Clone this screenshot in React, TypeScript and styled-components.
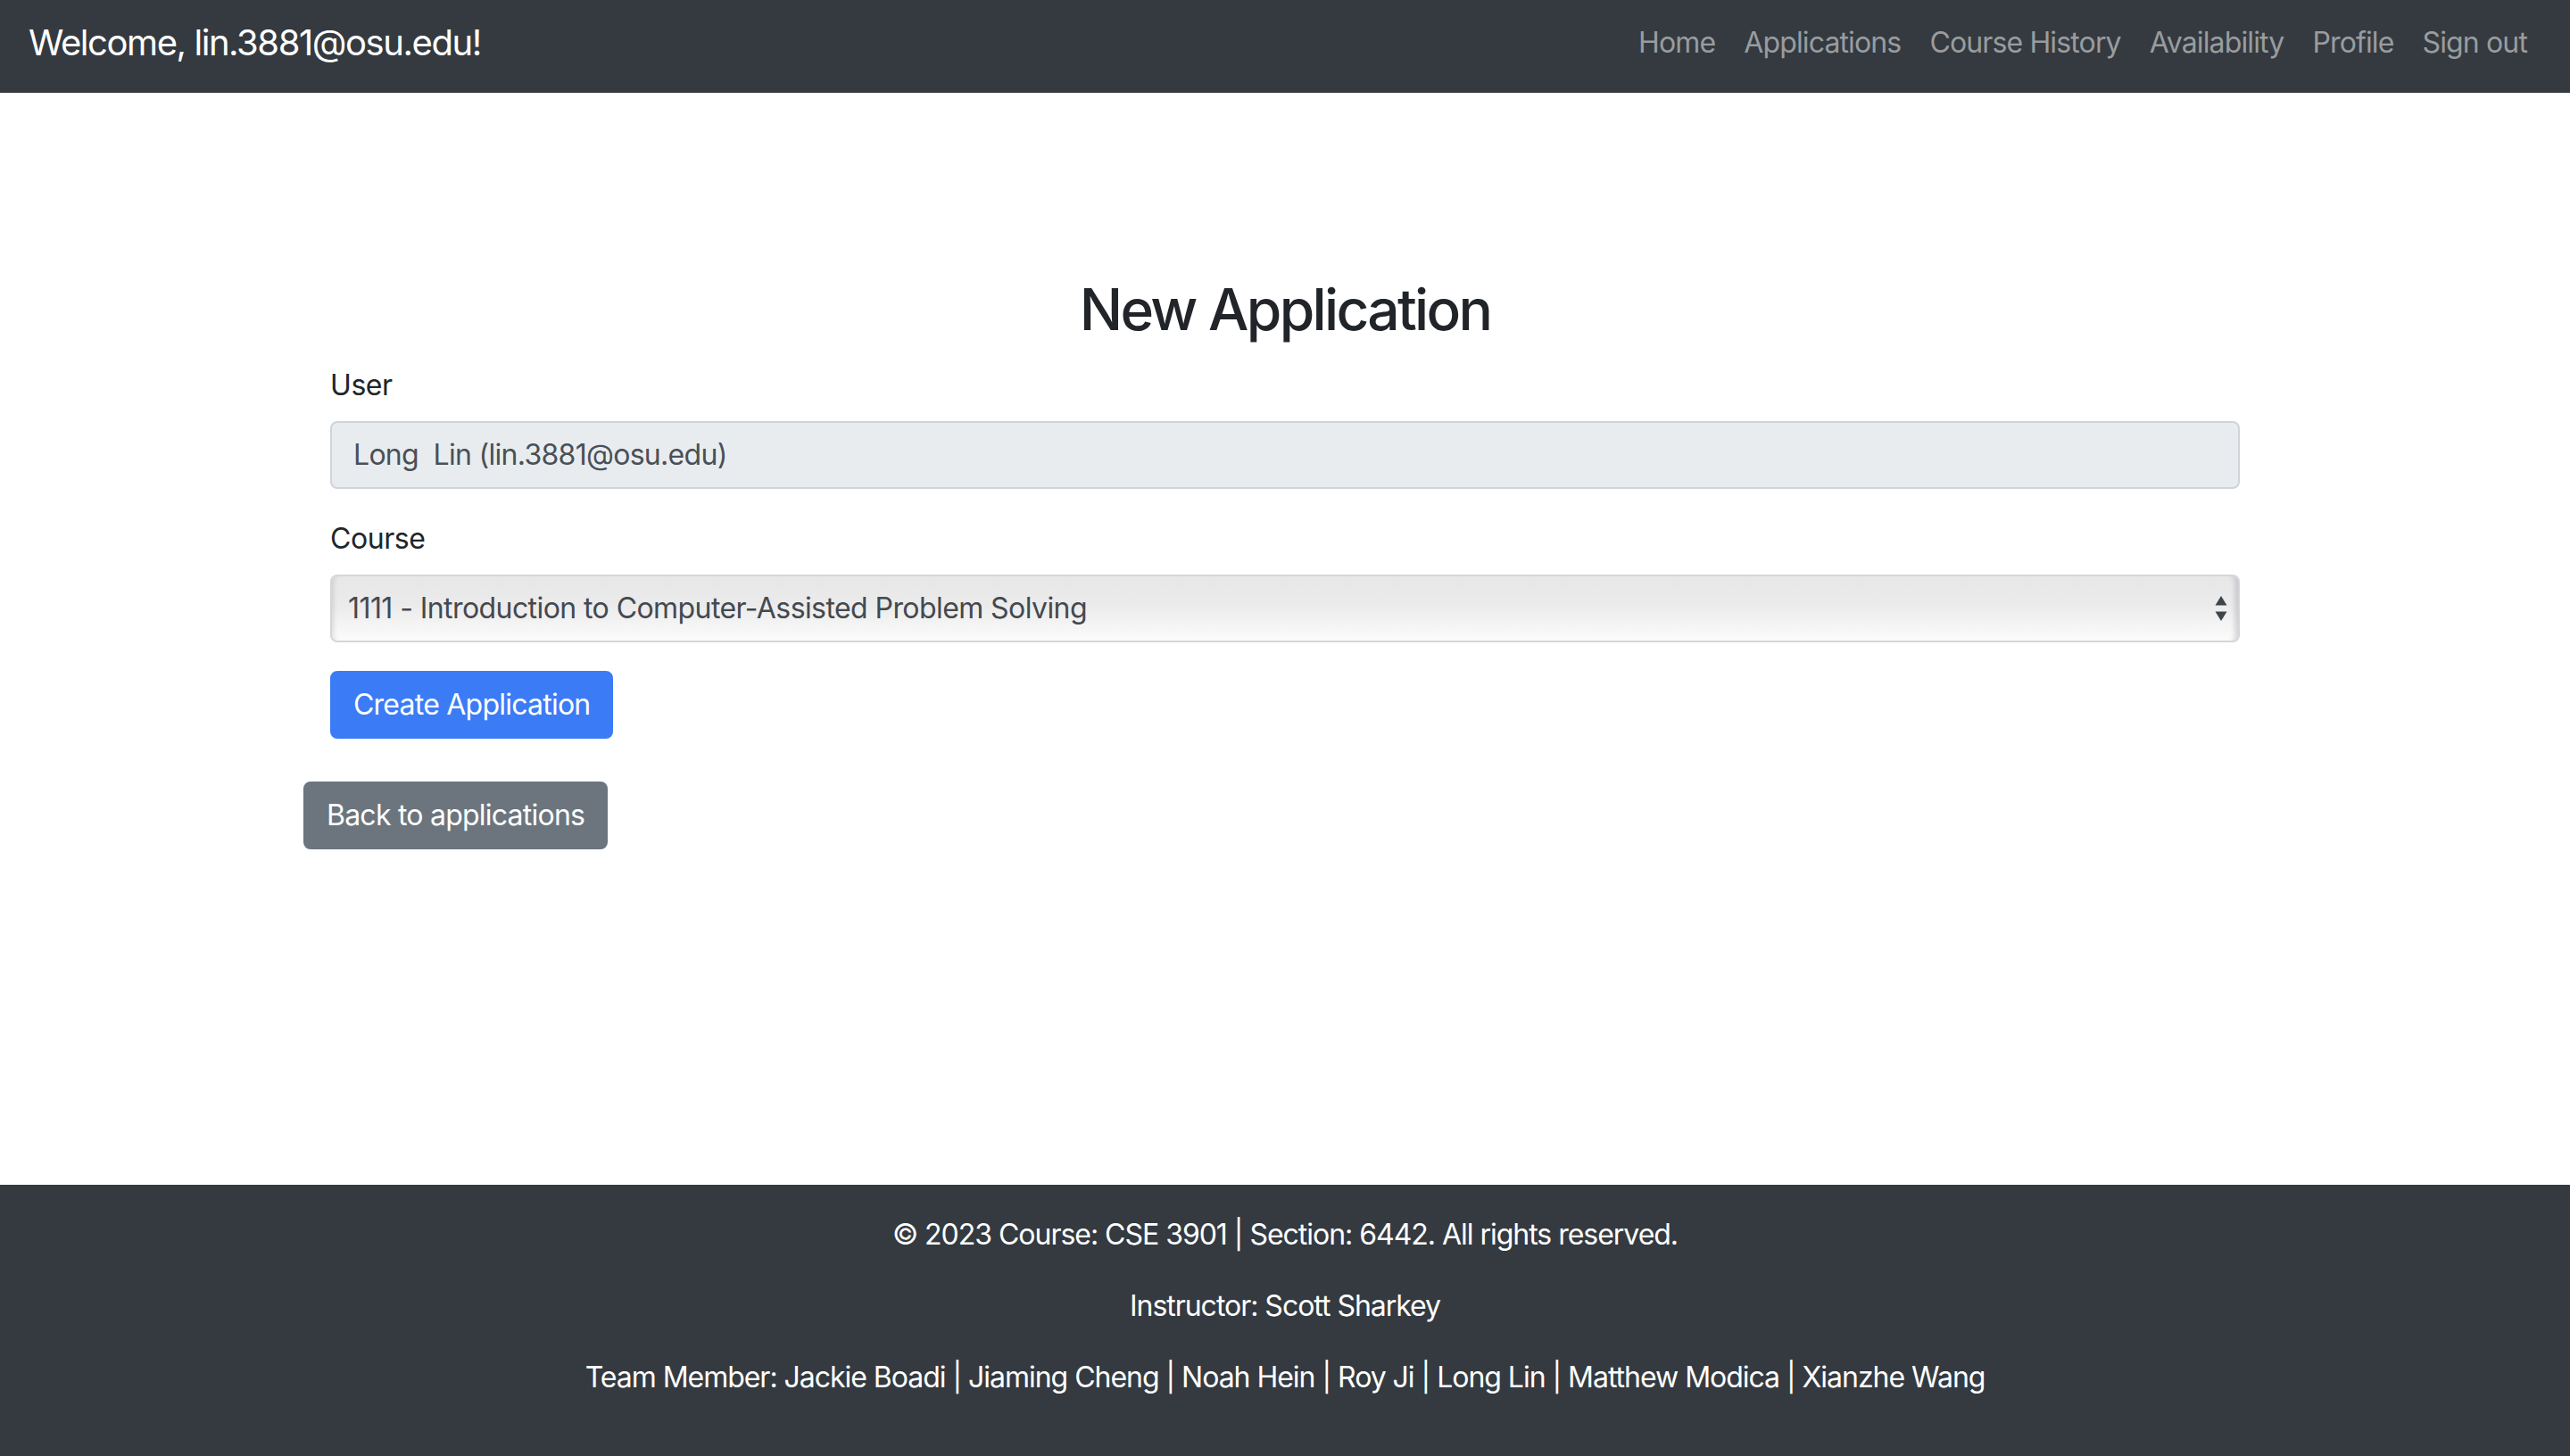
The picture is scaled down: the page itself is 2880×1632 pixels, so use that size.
import React from "react";
import styled, { createGlobalStyle } from "styled-components";

const GlobalStyle = createGlobalStyle`
  html, body {
    margin: 0;
    padding: 0;
    background: #ffffff;
  }
  body {
    font-family: Inter, "Noto Sans", "Liberation Sans", sans-serif;
    color: #212529;
    letter-spacing: -0.026em;
  }
  * { box-sizing: border-box; }
`;

const Page = styled.div`
  min-height: 1632px;
  display: flex;
  flex-direction: column;
`;

const Navbar = styled.nav`
  height: 104px;
  background: #343a40;
  display: flex;
  align-items: center;
  justify-content: space-between;
  padding: 0 32px 8px;
`;

const Brand = styled.a`
  font-size: 40px;
  line-height: 60px;
  letter-spacing: -0.036em;
  color: #ffffff;
  text-decoration: none;
`;

const NavList = styled.ul`
  display: flex;
  list-style: none;
  margin: 0;
  padding: 0;
`;

const NavLink = styled.a`
  display: block;
  padding: 0 16px;
  font-size: 32px;
  line-height: 48px;
  letter-spacing: -0.027em;
  color: #999c9f;
  text-decoration: none;
`;

const Main = styled.main`
  flex: 1;
  padding-top: 205px;
`;

const Container = styled.div`
  width: 2200px;
  margin: 0 auto;
`;

const Form = styled.form`
  padding: 0 30px;
`;

const Title = styled.h2`
  margin: 0 0 22px;
  font-size: 64px;
  font-weight: 500;
  line-height: 1.2;
  letter-spacing: -0.042em;
  text-align: center;
  color: #212529;
`;

const Group = styled.div`
  margin-bottom: 32px;
`;

const Label = styled.label`
  display: block;
  font-size: 32px;
  line-height: 48px;
  margin-bottom: 16px;
  color: #212529;
`;

const TextInput = styled.input`
  display: block;
  width: 100%;
  height: 76px;
  padding: 0 24px;
  font-family: inherit;
  font-size: 32px;
  letter-spacing: -0.022em;
  color: #495057;
  background: #e9ecef;
  border: 2px solid #ced4da;
  border-radius: 8px;
  outline: none;
`;

const SelectWrap = styled.div`
  position: relative;
`;

const Select = styled.select`
  display: block;
  width: 100%;
  height: 76px;
  padding: 0 60px 0 18px;
  font-family: inherit;
  font-size: 32px;
  letter-spacing: -0.018em;
  color: #44494f;
  appearance: none;
  -webkit-appearance: none;
  border: 2px solid #d3d7db;
  border-radius: 8px;
  background: linear-gradient(to bottom, #e7e7e7 0%, #ebebeb 45%, #f4f4f4 75%, #fcfcfc 100%);
  box-shadow: inset -8px 0 6px -5px rgba(0, 0, 0, 0.16), inset 6px 0 5px -4px rgba(0, 0, 0, 0.1);
  outline: none;
`;

const Arrows = styled.svg`
  position: absolute;
  right: 14px;
  top: 24px;
  width: 14px;
  height: 30px;
  pointer-events: none;
`;

const Button = styled.button<{ $variant: "primary" | "secondary" }>`
  display: inline-block;
  height: 76px;
  padding: 0 24px;
  font-family: inherit;
  font-size: 32px;
  line-height: 48px;
  letter-spacing: -0.024em;
  color: #ffffff;
  background: ${(p) => (p.$variant === "primary" ? "#3b7cf6" : "#6c757d")};
  border: 2px solid ${(p) => (p.$variant === "primary" ? "#3b7cf6" : "#6c757d")};
  border-radius: 8px;
  cursor: pointer;
`;

const BackRow = styled.div`
  margin-top: 48px;
`;

const Footer = styled.footer`
  background: #343a40;
  padding: 32px 0;
  text-align: center;
  color: #ffffff;
`;

const FooterLine = styled.p`
  margin: 0 0 32px;
  font-size: 32px;
  line-height: 48px;
  letter-spacing: -0.032em;
`;

const links = ["Home", "Applications", "Course History", "Availability", "Profile", "Sign out"];

export default function App() {
  return (
    <Page>
      <GlobalStyle />
      <Navbar>
        <Brand href="#">Welcome, lin.3881@osu.edu!</Brand>
        <NavList>
          {links.map((l) => (
            <li key={l}>
              <NavLink href="#">{l}</NavLink>
            </li>
          ))}
        </NavList>
      </Navbar>
      <Main>
        <Container>
          <Form onSubmit={(e) => e.preventDefault()}>
            <Title>New Application</Title>
            <Group>
              <Label htmlFor="user">User</Label>
              <TextInput id="user" readOnly value="Long  Lin (lin.3881@osu.edu)" />
            </Group>
            <Group>
              <Label htmlFor="course">Course</Label>
              <SelectWrap>
                <Select id="course" defaultValue="1111">
                  <option value="1111">1111 - Introduction to Computer-Assisted Problem Solving</option>
                </Select>
                <Arrows viewBox="0 0 14 30">
                  <path d="M7 0 L13.5 10.5 L0.5 10.5 Z" fill="#3f4448" />
                  <path d="M0.5 17.5 L13.5 17.5 L7 28 Z" fill="#3f4448" />
                </Arrows>
              </SelectWrap>
            </Group>
            <Button type="submit" $variant="primary">Create Application</Button>
          </Form>
          <BackRow>
            <Button type="button" $variant="secondary">Back to applications</Button>
          </BackRow>
        </Container>
      </Main>
      <Footer>
        <FooterLine>© 2023 Course: CSE 3901 | Section: 6442. All rights reserved.</FooterLine>
        <FooterLine>Instructor: Scott Sharkey</FooterLine>
        <FooterLine>Team Member: Jackie Boadi | Jiaming Cheng | Noah Hein | Roy Ji | Long Lin | Matthew Modica | Xianzhe Wang</FooterLine>
      </Footer>
    </Page>
  );
}
